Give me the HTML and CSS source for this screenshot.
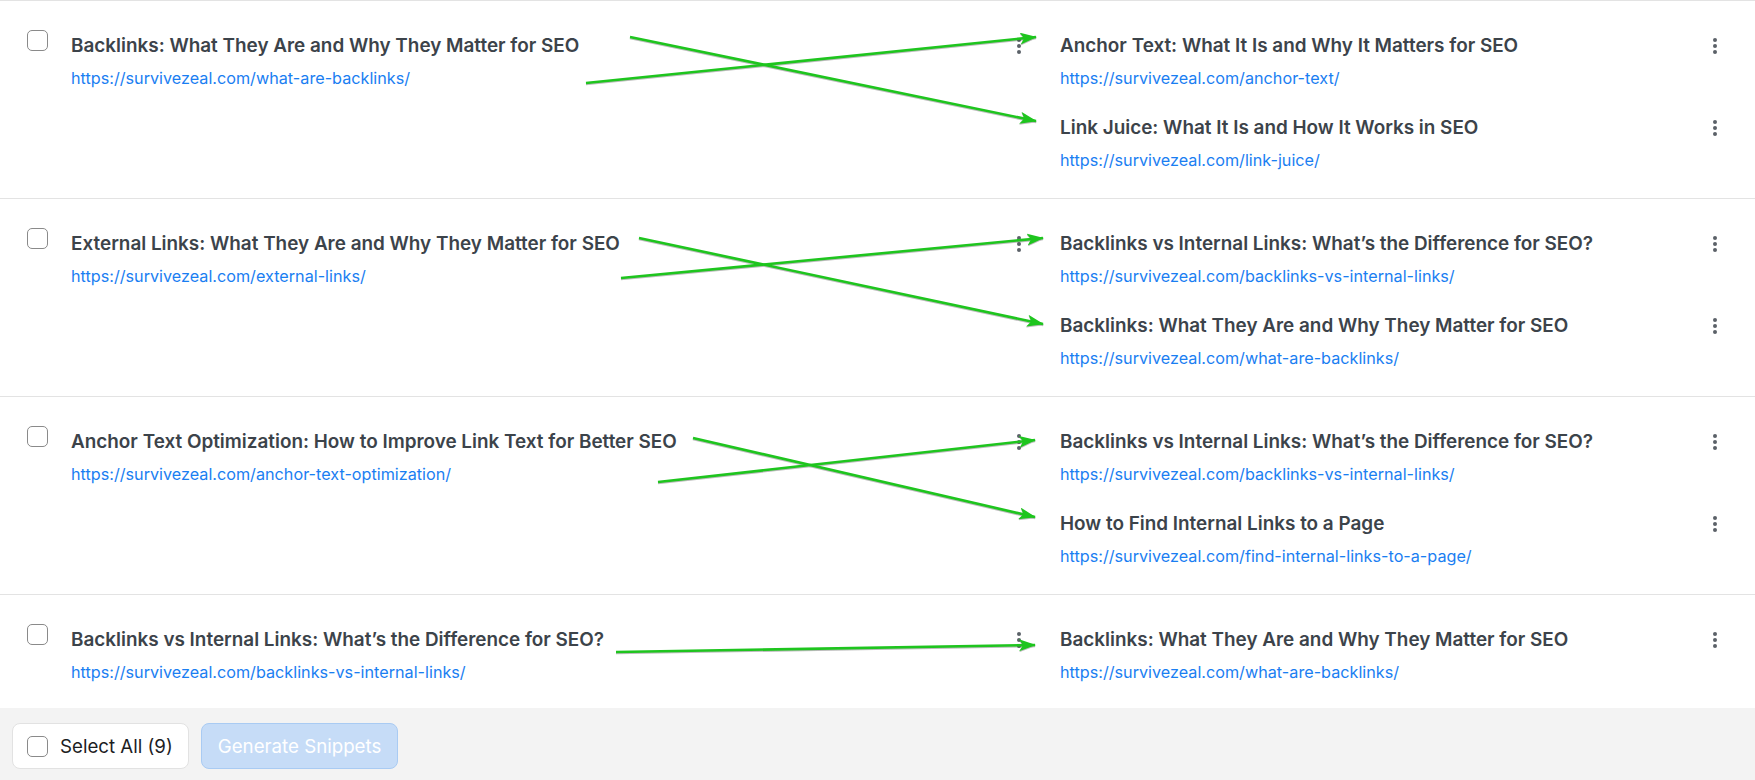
FILE: index.html
```html
<!DOCTYPE html>
<html lang="en">
<head>
  <meta charset="UTF-8">
  <meta name="viewport" content="width=device-width, initial-scale=1.0">
  <title>Link Suggestions</title>
  <link rel="stylesheet" href="styles.css">
</head>
<body>
  <div class="link-list">

    <div class="link-row">
      <div class="source">
        <input type="checkbox" class="check">
        <div class="post">
          <div class="post-title">Backlinks: What They Are and Why They Matter for SEO</div>
          <a class="post-url" href="#">https://survivezeal.com/what-are-backlinks/</a>
        </div>
        <button class="kebab"><span></span><span></span><span></span></button>
      </div>
      <div class="targets">
        <div class="target">
          <div class="post">
            <div class="post-title">Anchor Text: What It Is and Why It Matters for SEO</div>
            <a class="post-url" href="#">https://survivezeal.com/anchor-text/</a>
          </div>
          <button class="kebab"><span></span><span></span><span></span></button>
        </div>
        <div class="target">
          <div class="post">
            <div class="post-title">Link Juice: What It Is and How It Works in SEO</div>
            <a class="post-url" href="#">https://survivezeal.com/link-juice/</a>
          </div>
          <button class="kebab"><span></span><span></span><span></span></button>
        </div>
      </div>
    </div>

    <div class="link-row">
      <div class="source">
        <input type="checkbox" class="check">
        <div class="post">
          <div class="post-title">External Links: What They Are and Why They Matter for SEO</div>
          <a class="post-url" href="#">https://survivezeal.com/external-links/</a>
        </div>
        <button class="kebab"><span></span><span></span><span></span></button>
      </div>
      <div class="targets">
        <div class="target">
          <div class="post">
            <div class="post-title">Backlinks vs Internal Links: What’s the Difference for SEO?</div>
            <a class="post-url" href="#">https://survivezeal.com/backlinks-vs-internal-links/</a>
          </div>
          <button class="kebab"><span></span><span></span><span></span></button>
        </div>
        <div class="target">
          <div class="post">
            <div class="post-title">Backlinks: What They Are and Why They Matter for SEO</div>
            <a class="post-url" href="#">https://survivezeal.com/what-are-backlinks/</a>
          </div>
          <button class="kebab"><span></span><span></span><span></span></button>
        </div>
      </div>
    </div>

    <div class="link-row">
      <div class="source">
        <input type="checkbox" class="check">
        <div class="post">
          <div class="post-title">Anchor Text Optimization: How to Improve Link Text for Better SEO</div>
          <a class="post-url" href="#">https://survivezeal.com/anchor-text-optimization/</a>
        </div>
        <button class="kebab"><span></span><span></span><span></span></button>
      </div>
      <div class="targets">
        <div class="target">
          <div class="post">
            <div class="post-title">Backlinks vs Internal Links: What’s the Difference for SEO?</div>
            <a class="post-url" href="#">https://survivezeal.com/backlinks-vs-internal-links/</a>
          </div>
          <button class="kebab"><span></span><span></span><span></span></button>
        </div>
        <div class="target">
          <div class="post">
            <div class="post-title">How to Find Internal Links to a Page</div>
            <a class="post-url" href="#">https://survivezeal.com/find-internal-links-to-a-page/</a>
          </div>
          <button class="kebab"><span></span><span></span><span></span></button>
        </div>
      </div>
    </div>

    <div class="link-row">
      <div class="source">
        <input type="checkbox" class="check">
        <div class="post">
          <div class="post-title">Backlinks vs Internal Links: What’s the Difference for SEO?</div>
          <a class="post-url" href="#">https://survivezeal.com/backlinks-vs-internal-links/</a>
        </div>
        <button class="kebab"><span></span><span></span><span></span></button>
      </div>
      <div class="targets">
        <div class="target">
          <div class="post">
            <div class="post-title">Backlinks: What They Are and Why They Matter for SEO</div>
            <a class="post-url" href="#">https://survivezeal.com/what-are-backlinks/</a>
          </div>
          <button class="kebab"><span></span><span></span><span></span></button>
        </div>
      </div>
    </div>

  </div>

  <div class="footer">
    <label class="select-all"><input type="checkbox" class="check"> Select All (9)</label>
    <button class="generate" disabled>Generate Snippets</button>
  </div>

  <!-- annotation arrows drawn over the list -->
  <svg class="arrows" width="1755" height="780" viewBox="0 0 1755 780">
    <defs>
      <marker id="head" markerUnits="userSpaceOnUse" markerWidth="18" markerHeight="12" refX="16" refY="6" orient="auto">
        <path d="M0 0 L17 6 L0 12 L4 6 Z" fill="#1ec51e"/>
      </marker>
    </defs>
    <g stroke="#1ec51e" stroke-width="2.6" fill="none" marker-end="url(#head)">
      <path d="M630 37 L1036 121"/>
      <path d="M586 83 L1036 37"/>
      <path d="M639 238 L1043 324"/>
      <path d="M621 278 L1043 238"/>
      <path d="M693 438 L1035 517"/>
      <path d="M658 482 L1035 440"/>
      <path d="M616 652 L1035 645"/>
    </g>
  </svg>
</body>
</html>
```

FILE: styles.css
```css
body {
  margin: 0;
  background: #fff;
  font-family: Inter, "Noto Sans", sans-serif;
  position: relative;
}

.link-row {
  display: grid;
  grid-template-columns: 1004px 1fr;
  column-gap: 29px;
  padding: 31px 28px 26px 27px;
  border-top: 1px solid #e3e3e3;
}

.link-row:last-child {
  padding-bottom: 24px;
}

.source,
.target {
  display: flex;
  align-items: flex-start;
}

.targets {
  display: flex;
  flex-direction: column;
  gap: 24px;
}

.check {
  appearance: none;
  -webkit-appearance: none;
  width: 21px;
  height: 21px;
  margin: -2px 23px 0 0;
  flex: none;
  border: 1px solid #8a8a8a;
  border-radius: 5px;
  background: #fff;
}

.post {
  flex: 1;
  min-width: 0;
}

.post-title {
  font-size: 18.9px;
  line-height: 28px;
  font-weight: 600;
  color: #3c434a;
}

.post-url {
  display: block;
  margin-top: 6px;
  font-size: 16.2px;
  line-height: 24px;
  color: #1a7ef2;
  text-decoration: none;
}

.kebab {
  width: 24px;
  height: 28px;
  padding: 0;
  border: 0;
  background: none;
  display: flex;
  flex-direction: column;
  align-items: center;
  justify-content: center;
  gap: 2px;
  flex: none;
}

.kebab span {
  width: 4px;
  height: 4px;
  border-radius: 50%;
  background: #5b6168;
}

.footer {
  display: flex;
  gap: 12px;
  height: 72px;
  box-sizing: border-box;
  padding: 15px 12px 11px;
  background: #f3f3f3;
}

.select-all {
  display: flex;
  align-items: center;
  box-sizing: border-box;
  height: 46px;
  padding: 0 15px 0 14px;
  background: #fff;
  border: 1px solid #e2e2e2;
  border-radius: 8px;
  font-size: 18.7px;
  color: #1d1d1f;
}

.select-all .check {
  margin: 0 12px 0 0;
}

.generate {
  box-sizing: border-box;
  height: 46px;
  padding: 0 16px;
  background: #c6dcf7;
  border: 1px solid #a9cbf3;
  border-radius: 8px;
  font-family: Inter, "Noto Sans", sans-serif;
  font-size: 18.7px;
  color: #fff;
}

.arrows {
  position: absolute;
  top: 0;
  left: 0;
  pointer-events: none;
  filter: drop-shadow(0 1px 0 rgba(60, 60, 60, 0.35));
}
```
